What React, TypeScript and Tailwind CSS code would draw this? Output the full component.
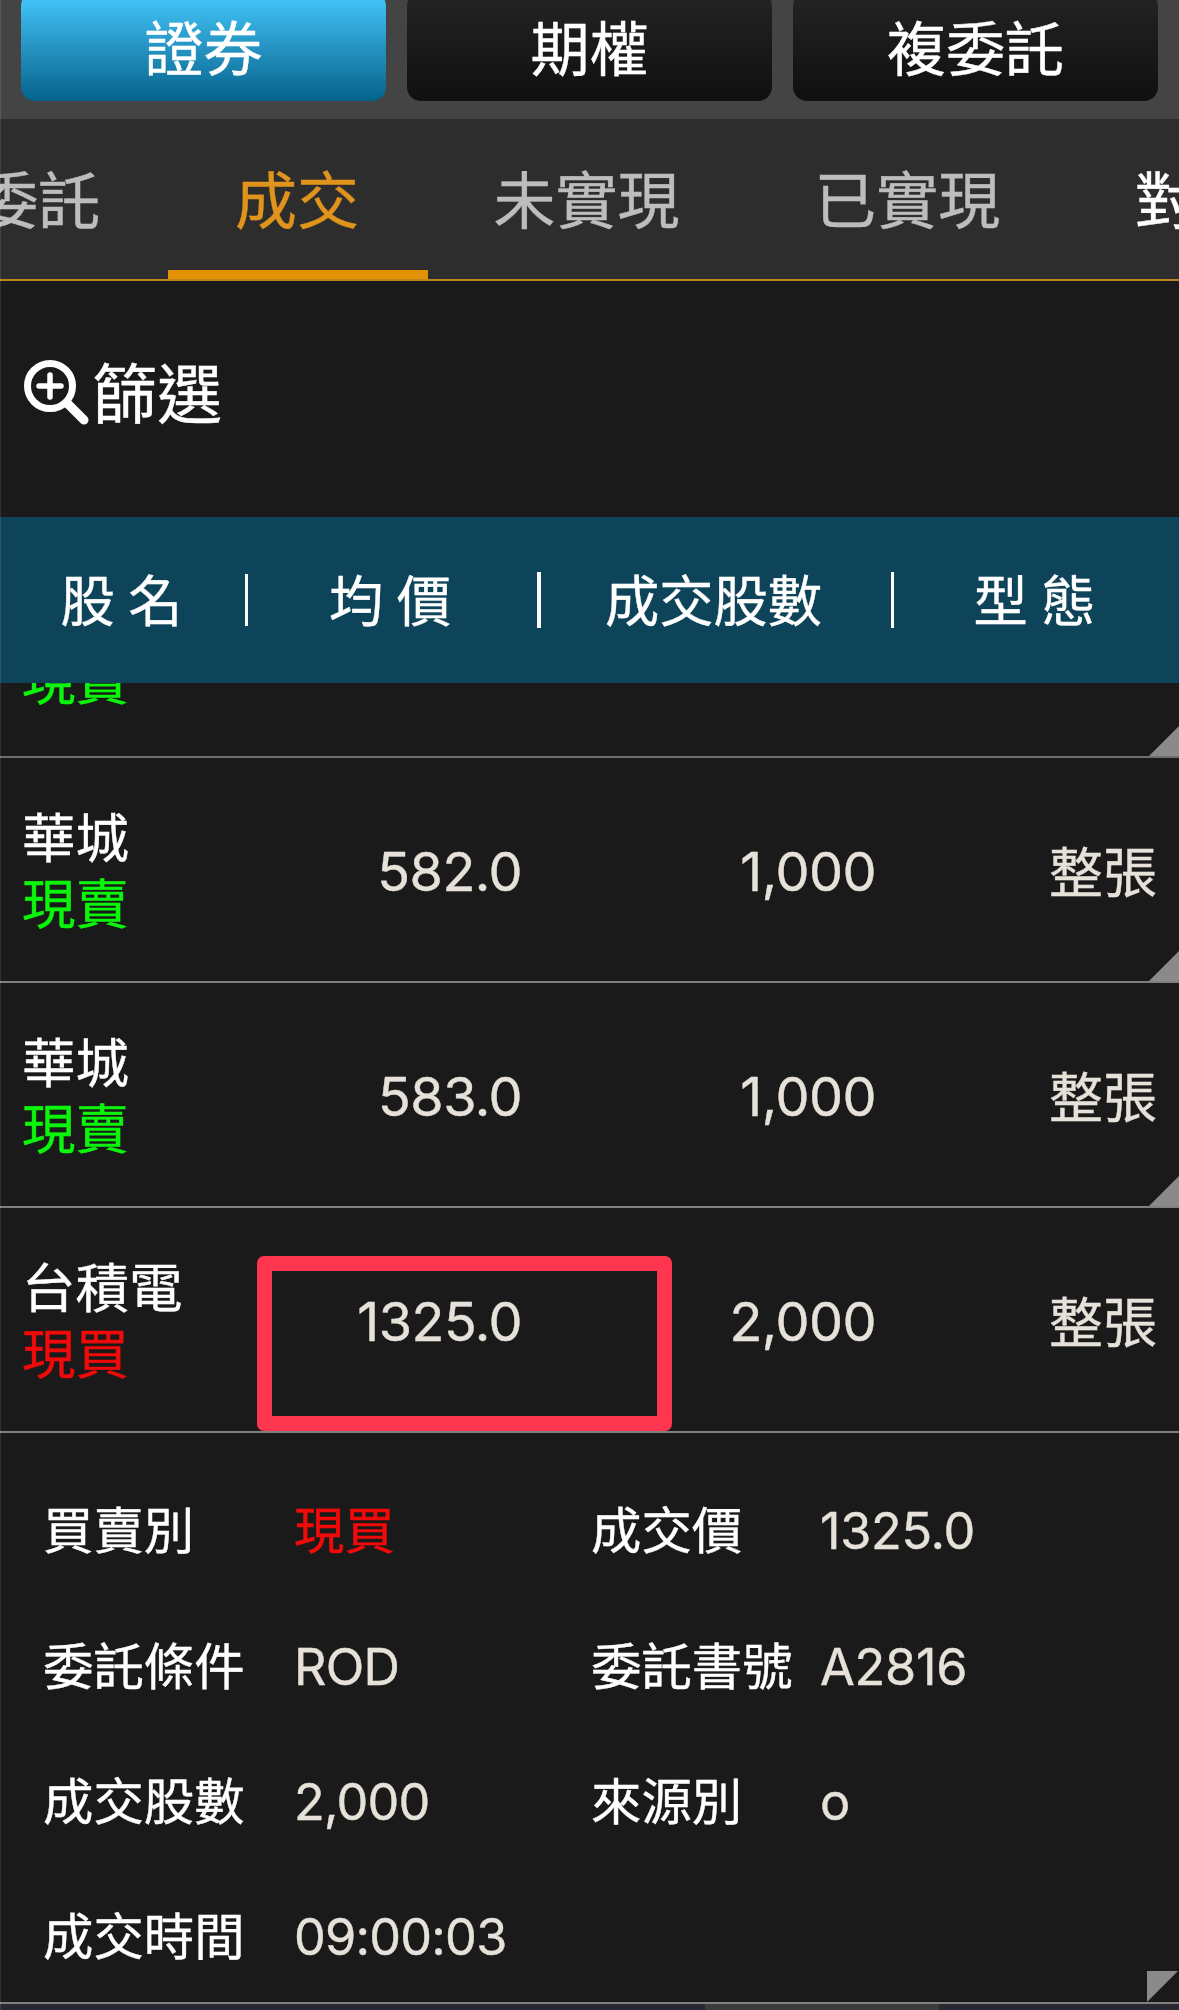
import React from 'react';
import clsx from 'clsx';

interface Trade {
  name: string;
  side: string;
  price: string;
  shares: string;
  kind: string;
  highlighted?: boolean;
}

const markets = ['證券', '期權', '複委託'];

const tabs = [
  { label: '委託', className: 'text-[#bdbdbd]' },
  { label: '成交', className: 'text-[#e0941c]' },
  { label: '未實現', className: 'text-[#bdbdbd]' },
  { label: '已實現', className: 'text-[#bdbdbd]' },
  { label: '對帳單', className: 'text-white' },
];

const trades: Trade[] = [
  { name: '華城', side: '現賣', price: '582.0', shares: '1,000', kind: '整張' },
  { name: '華城', side: '現賣', price: '583.0', shares: '1,000', kind: '整張' },
  { name: '台積電', side: '現買', price: '1325.0', shares: '2,000', kind: '整張', highlighted: true },
];

const details = [
  ['買賣別', '現買', '成交價', '1325.0'],
  ['委託條件', 'ROD', '委託書號', 'A2816'],
  ['成交股數', '2,000', '來源別', 'o'],
  ['成交時間', '09:00:03', '', ''],
];

function sideColor(side: string) {
  return side === '現賣' ? 'text-[#0cf50c]' : 'text-[#f00a0a]';
}

function Corner() {
  return (
    <svg className="absolute right-0 bottom-0 w-[30px] h-[30px]" viewBox="0 0 30 30">
      <path d="M30 0V30H0Z" fill="#8a8a8a" />
    </svg>
  );
}

function MarketBar() {
  return (
    <div className="flex gap-[21px] h-[119px] px-[21px] pb-[18px] bg-[#444444]">
      {markets.map((label, i) => (
        <button
          key={label}
          className={clsx(
            'flex-1 h-[109px] -mt-2 pt-[5px] rounded-[14px] bg-linear-to-b text-[59px] leading-none text-white',
            i === 0 ? 'from-[#45caff] to-[#03638c]' : 'from-[#242424] to-[#101010]'
          )}
        >
          {label}
        </button>
      ))}
    </div>
  );
}

function TabBar() {
  return (
    <div className="h-[162px] bg-[#2d2d2d] border-b-[2px] border-[#c0851c] overflow-hidden">
      <div className="flex h-full -ml-[91px]">
        {tabs.map((tab, i) => (
          <div
            key={tab.label}
            className={clsx('flex flex-col shrink-0 text-[62px] leading-none whitespace-nowrap', tab.className)}
          >
            <span className="flex-1 px-[67.3px] pt-[52px]">{tab.label}</span>
            {i === 1 && <span className="h-[9px] -mr-[2px] bg-[#e39105]" />}
          </div>
        ))}
      </div>
    </div>
  );
}

function Filter() {
  return (
    <div className="flex items-center h-[236px] pl-[23px] pb-[12px]">
      <svg className="w-[67px] h-[67px]" viewBox="0 0 67 67" fill="none" stroke="#fff" strokeLinecap="round">
        <circle cx="27" cy="26" r="22.5" strokeWidth="7" />
        <path d="M44 43L61 60" strokeWidth="9" />
        <path d="M27 15V37M16 26H38" strokeWidth="5.5" />
      </svg>
      <span className="ml-[2px] pt-[2px] text-[65px] leading-none">篩選</span>
    </div>
  );
}

function TableHead() {
  const cell = 'flex items-center justify-center pt-[4px] text-[54.3px] [word-spacing:-2px] whitespace-nowrap';
  return (
    <div className="flex items-center h-[166px] bg-[#0e4459] text-white">
      <div className={clsx(cell, 'w-[245px] pr-[2px]')}>股 名</div>
      <div className="w-[3px] h-[52px] bg-white" />
      <div className={clsx(cell, 'w-[289px] pr-[5px]')}>均 價</div>
      <div className="w-[4px] h-[56px] bg-white" />
      <div className={clsx(cell, 'w-[350px] pr-[5px]')}>成交股數</div>
      <div className="w-[3px] h-[56px] bg-white" />
      <div className={clsx(cell, 'flex-1 pr-[4px]')}>型 態</div>
    </div>
  );
}

function TradeRow({ trade }: { trade: Trade }) {
  return (
    <div className="relative flex items-center h-[225px] pt-[5px] border-b-2 border-[#808080] text-[#e6e1d9] text-[54px] leading-none">
      <div className="w-[240px] pl-[22px] text-[53.5px] leading-[66.5px] whitespace-nowrap">
        <p className="text-white">{trade.name}</p>
        <p className={sideColor(trade.side)}>{trade.side}</p>
      </div>
      <span className="w-[282px] text-right tracking-[-0.01em]">{trade.price}</span>
      <span className="w-[354px] text-right tracking-[-0.01em]">{trade.shares}</span>
      <span className="w-[281px] pt-[3px] text-right">{trade.kind}</span>
      {trade.highlighted ? (
        <div className="absolute left-[257px] top-[48px] w-[415px] h-[175px] border-[15px] border-[#ff364f] rounded-[7px]" />
      ) : (
        <Corner />
      )}
    </div>
  );
}

function TradeDetail() {
  return (
    <div className="relative h-[571px] pt-[31px] border-b-2 border-[#808080]">
      {details.map(([label, value, label2, value2]) => (
        <div key={label} className="flex items-center h-[135.3px] pl-[43px] text-[50.4px] leading-none whitespace-nowrap">
          <span className="w-[251px]">{label}</span>
          <span
            className={clsx('w-[297px]', value === '現買' ? sideColor(value) : 'text-[#e6e1d9] tracking-[-0.015em]')}
          >
            {value}
          </span>
          <span className="w-[229px]">{label2}</span>
          <span className="text-[#e6e1d9] tracking-[-0.005em]">{value2}</span>
        </div>
      ))}
      <svg className="absolute right-[1px] bottom-0 w-[31px] h-[31px]" viewBox="0 0 31 31">
        <path d="M0 0H31L0 31Z" fill="#8a8a8a" />
      </svg>
    </div>
  );
}

export default function App() {
  return (
    <div className="relative w-[1179px] h-[2010px] overflow-hidden bg-[#1a1a1a] text-white font-['Inter','Noto_Sans_CJK_TC',sans-serif] [-webkit-text-stroke-width:0.4px]">
      <MarketBar />
      <TabBar />
      <Filter />
      <TableHead />
      {/* row scrolled under the header */}
      <div className="relative flex items-end h-[75px] pl-[22px] pb-[42px] overflow-hidden border-b-2 border-[#6f6f6f]">
        <p className="text-[53.5px] leading-[66px] text-[#0cf50c]">現賣</p>
        <Corner />
      </div>
      {trades.map((trade, i) => (
        <TradeRow key={i} trade={trade} />
      ))}
      <TradeDetail />
      <div className="flex h-[7px] bg-[#292933]">
        <div className="ml-[705px] w-[234px] bg-[#3c3c3c]" />
      </div>
      <div className="absolute left-0 top-0 w-px h-full bg-white/10" />
    </div>
  );
}
